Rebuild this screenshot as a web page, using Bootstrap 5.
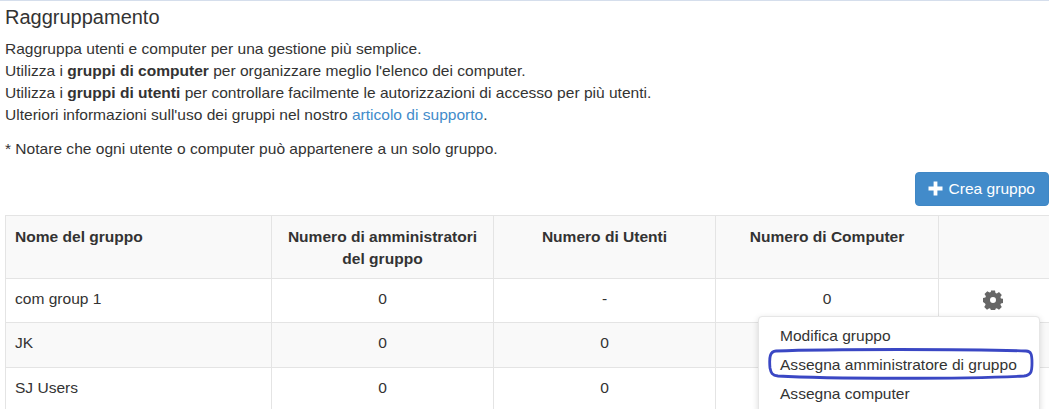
<!DOCTYPE html>
<html lang="en">
<head>
  <meta charset="UTF-8">
  <title>Raggruppamento</title>
  <link rel="stylesheet" href="https://cdn.jsdelivr.net/npm/bootstrap@5.3.0/dist/css/bootstrap.min.css">
<style>
html, body { height: 409px; overflow: hidden; }
body {
  font-family: "Liberation Sans", Arial, sans-serif;
  font-size: 15.56px;
  line-height: 22px;
  color: #333;
  border-top: 1px solid #d5deec;
}
.page-wrap { padding: 4px 0 0 5px; width: 1049px; }
.page-title { font-size: 20px; line-height: 24px; font-weight: 400; margin: 0 0 9px; }
.intro { margin: 0; }
.intro a { color: #428bca; text-decoration: none; }
.note { margin: 12px 0 0; }
.btn-crea {
  background: #428bca; border: 1px solid #3f87c5; color: #fff;
  font-size: 15.56px; line-height: 22px; padding: 5px 13px 5px 12.500px; border-radius: 4px;
}
.btn-crea svg { vertical-align: -2px; margin-right: 1px; }
.toolbar { margin-top: 12px; height: 43px; }
.table-wrap { position: relative; }
.group-table { width: 1044px; table-layout: fixed; border-collapse: collapse; margin: 0; color: #333; }
.group-table th, .group-table td { border: 1px solid #e4e4e4; padding: 8px 10px 12px; line-height: 23.5px; vertical-align: top; }
.group-table th { background: #f9f9f9; font-weight: 700; line-height: 22px; padding-top: 10px; padding-bottom: 8px; text-align: center; }
.group-table tbody tr:first-child td { line-height: 23px; }
.group-table tbody tr:nth-child(even) td { background: #f9f9f9; }
.group-table .first-col { text-align: left; padding-left: 9px; }
.group-table td { text-align: center; }
.gear-icon { margin-right: 2px; }
.action-menu {
  position: absolute; left: 753px; top: 101px; width: 282px; margin: 0;
  padding: 4px 0; font-size: 15.56px; color: #333; display: block;
  border: 1px solid #e6e6e6; border-radius: 4px; box-shadow: 0 2px 6px rgba(0,0,0,.15);
}
.action-menu .dropdown-item { padding: 0 21px; line-height: 29px; color: #333; }
.highlight-ring { position: absolute; left: 9px; top: 31px; pointer-events: none; }
</style>
</head>
<body>
<div class="page-wrap">
  <h1 class="page-title">Raggruppamento</h1>
  <p class="intro">Raggruppa utenti e computer per una gestione più semplice.<br>
  Utilizza i <b>gruppi di computer</b> per organizzare meglio l'elenco dei computer.<br>
  Utilizza i <b>gruppi di utenti</b> per controllare facilmente le autorizzazioni di accesso per più utenti.<br>
  Ulteriori informazioni sull'uso dei gruppi nel nostro <a href="#">articolo di supporto</a>.</p>
  <p class="note">* Notare che ogni utente o computer può appartenere a un solo gruppo.</p>

  <div class="toolbar d-flex justify-content-end">
    <div>
      <button class="btn btn-crea" type="button"><svg width="15" height="15" viewBox="0 0 15 15"><path fill="#fff" d="M5.6 0.5h3.8v5.1h5.1v3.8H9.4v5.1H5.6V9.4H0.5V5.6h5.1z"/></svg> Crea gruppo</button>
    </div>
  </div>

  <div class="table-wrap">
    <table class="table group-table">
      <colgroup>
        <col style="width:266px"><col style="width:222px"><col style="width:222px"><col style="width:223px"><col style="width:111px">
      </colgroup>
      <thead>
        <tr>
          <th class="first-col">Nome del gruppo</th>
          <th>Numero di amministratori del gruppo</th>
          <th>Numero di Utenti</th>
          <th>Numero di Computer</th>
          <th></th>
        </tr>
      </thead>
      <tbody>
        <tr>
          <td class="first-col">com group 1</td><td>0</td><td>-</td><td>0</td>
          <td><svg class="gear-icon" width="20" height="20" viewBox="0 0 20 20"><path fill="#666" fill-rule="evenodd" d="M8 0.500h4l.5 2.500 1.300.5 2.200-1.400 2.800 2.800-1.400 2.200.5 1.300 2.500.5v4l-2.500.5-.5 1.300 1.400 2.200-2.800 2.800-2.200-1.400-1.300.5-.5 2.500H8l-.5-2.500-1.300-.5-2.200 1.400-2.800-2.800 1.400-2.200-.5-1.300L-.1 12V8l2.500-.5.5-1.300-1.400-2.200 2.800-2.800 2.200 1.400 1.300-.5zM10 7a3 3 0 1 0 0 6 3 3 0 0 0 0-6z"/></svg></td>
        </tr>
        <tr><td class="first-col">JK</td><td>0</td><td>0</td><td></td><td></td></tr>
        <tr><td class="first-col">SJ Users</td><td>0</td><td>0</td><td></td><td></td></tr>
      </tbody>
    </table>

    <div class="dropdown-menu action-menu">
      <a class="dropdown-item" href="#">Modifica gruppo</a>
      <a class="dropdown-item" href="#">Assegna amministratore di gruppo</a>
      <a class="dropdown-item" href="#">Assegna computer</a>
      <svg class="highlight-ring" width="266" height="32" viewBox="0 0 266 32"><path fill="none" stroke="#3a47c4" stroke-width="2.800" d="M8 3C60 1 200 1 258 3c5 .3 6 3 6 12 0 9-1 12-8 13C200 31 60 31 10 28c-6-.5-7-3-8-8C1 9 2 3.300 8 3z"/></svg>
    </div>
  </div>
</div>
</body>
</html>
